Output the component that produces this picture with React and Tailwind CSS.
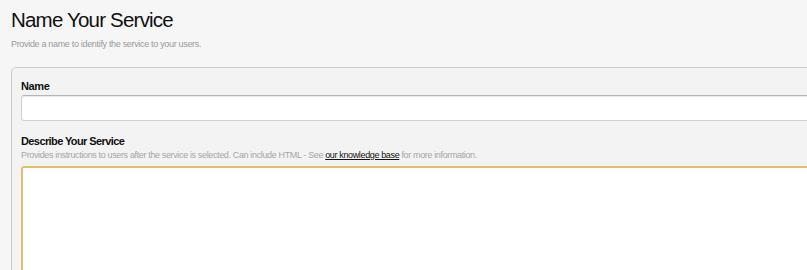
export default function App() {
  return (
    <div
      className="w-[807px] h-[270px] overflow-hidden bg-[#f6f6f6] text-[#111]"
      style={{ fontFamily: '"Liberation Sans", Arial, sans-serif' }}
    >
      <div className="pl-[11px] pt-[7px]">
        <h1 className="text-[20.5px] leading-[25px] tracking-[-0.8px] text-[#111]">
          Name Your Service
        </h1>
        <p className="mt-[7px] text-[9px] leading-[11px] tracking-[-0.32px] text-[#9a9a9a]">
          Provide a name to identify the service to your users.
        </p>
      </div>

      {/* Form panel */}
      <div className="ml-[11px] mt-[17px] w-[900px] h-[300px] rounded-[5px] border border-[#cacaca] bg-[#f3f3f3] pl-[9px] pt-[12px]">
        <label className="block text-[11px] leading-[13px] font-bold tracking-[-0.4px] text-[#111]">
          Name
        </label>
        <input
          type="text"
          className="mt-[2px] block w-[880px] h-[26px] rounded-[3px] border border-[#cfcfcf] border-t-[#b5b5b5] bg-white outline-none shadow-[inset_0_1px_1px_rgba(0,0,0,0.08)]"
        />

        <label className="mt-[14px] block text-[11px] leading-[13px] font-bold tracking-[-0.6px] text-[#111]">
          Describe Your Service
        </label>
        <p className="mt-[2px] text-[9px] leading-[11px] tracking-[-0.36px] text-[#a5a5a5]">
          Provides instructions to users after the service is selected. Can include HTML - See{" "}
          <a href="#" className="text-[#111] underline">
            our knowledge base
          </a>{" "}
          for more information.
        </p>
        <textarea className="mt-[5px] block w-[880px] h-[200px] rounded-[3px] border-2 border-[#e6bd6d] bg-white outline-none resize-none" />
      </div>
    </div>
  );
}
